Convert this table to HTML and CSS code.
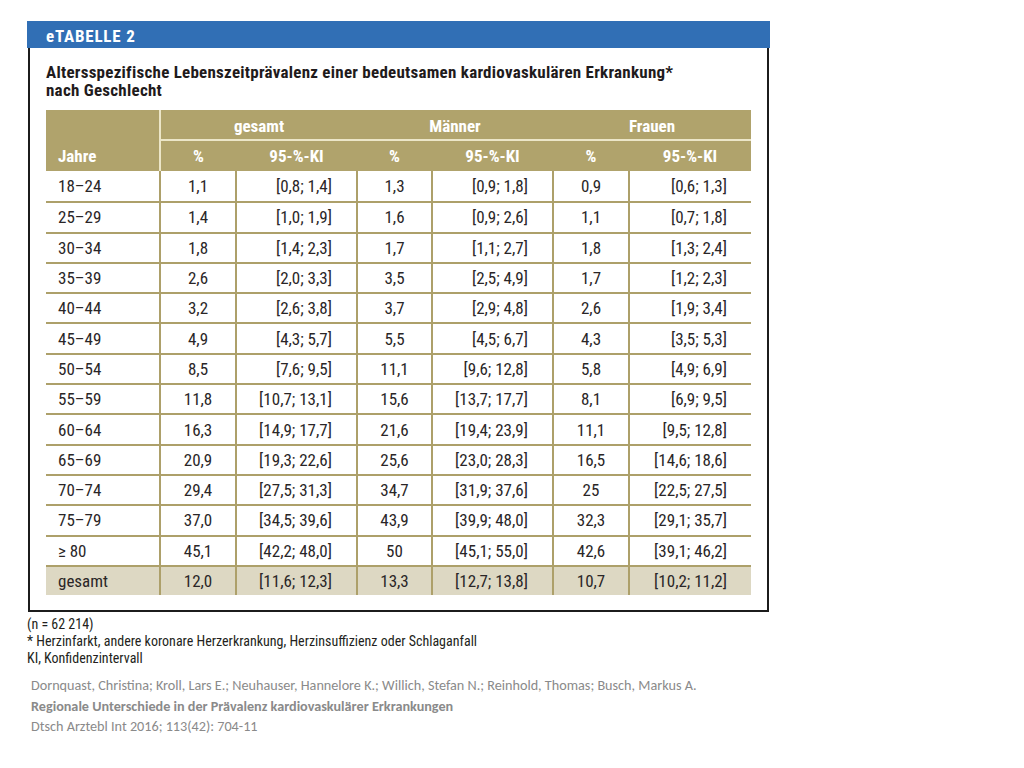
FILE: index.html
```html
<!DOCTYPE html>
<html lang="de">
<head>
<meta charset="utf-8">
<title>eTABELLE 2</title>
<link rel="stylesheet" href="styles.css">
</head>
<body>
<div class="page">
  <div class="panel">
    <div class="panel-head">eTABELLE 2</div>
    <div class="panel-body">
      <h1 class="title">Altersspezifische Lebenszeitprävalenz einer bedeutsamen kardiovaskulären Erkrankung*<br>nach Geschlecht</h1>
      <table class="data">
        <colgroup>
          <col class="c-age"><col class="c-pct"><col class="c-ki"><col class="c-pct2"><col class="c-ki"><col class="c-pct"><col class="c-ki3">
        </colgroup>
        <thead>
          <tr class="h1">
            <th rowspan="2" class="age">Jahre</th>
            <th colspan="2" class="grp">gesamt</th>
            <th colspan="2" class="grp">Männer</th>
            <th colspan="2" class="grp">Frauen</th>
          </tr>
          <tr class="h2">
            <th>%</th><th>95-%-KI</th>
            <th>%</th><th>95-%-KI</th>
            <th>%</th><th>95-%-KI</th>
          </tr>
        </thead>
        <tbody>
          <tr><td>18–24</td><td>1,1</td><td>[0,8; 1,4]</td><td>1,3</td><td>[0,9; 1,8]</td><td>0,9</td><td>[0,6; 1,3]</td></tr>
          <tr><td>25–29</td><td>1,4</td><td>[1,0; 1,9]</td><td>1,6</td><td>[0,9; 2,6]</td><td>1,1</td><td>[0,7; 1,8]</td></tr>
          <tr><td>30–34</td><td>1,8</td><td>[1,4; 2,3]</td><td>1,7</td><td>[1,1; 2,7]</td><td>1,8</td><td>[1,3; 2,4]</td></tr>
          <tr><td>35–39</td><td>2,6</td><td>[2,0; 3,3]</td><td>3,5</td><td>[2,5; 4,9]</td><td>1,7</td><td>[1,2; 2,3]</td></tr>
          <tr><td>40–44</td><td>3,2</td><td>[2,6; 3,8]</td><td>3,7</td><td>[2,9; 4,8]</td><td>2,6</td><td>[1,9; 3,4]</td></tr>
          <tr><td>45–49</td><td>4,9</td><td>[4,3; 5,7]</td><td>5,5</td><td>[4,5; 6,7]</td><td>4,3</td><td>[3,5; 5,3]</td></tr>
          <tr><td>50–54</td><td>8,5</td><td>[7,6; 9,5]</td><td>11,1</td><td>[9,6; 12,8]</td><td>5,8</td><td>[4,9; 6,9]</td></tr>
          <tr><td>55–59</td><td>11,8</td><td>[10,7; 13,1]</td><td>15,6</td><td>[13,7; 17,7]</td><td>8,1</td><td>[6,9; 9,5]</td></tr>
          <tr><td>60–64</td><td>16,3</td><td>[14,9; 17,7]</td><td>21,6</td><td>[19,4; 23,9]</td><td>11,1</td><td>[9,5; 12,8]</td></tr>
          <tr><td>65–69</td><td>20,9</td><td>[19,3; 22,6]</td><td>25,6</td><td>[23,0; 28,3]</td><td>16,5</td><td>[14,6; 18,6]</td></tr>
          <tr><td>70–74</td><td>29,4</td><td>[27,5; 31,3]</td><td>34,7</td><td>[31,9; 37,6]</td><td>25</td><td>[22,5; 27,5]</td></tr>
          <tr><td>75–79</td><td>37,0</td><td>[34,5; 39,6]</td><td>43,9</td><td>[39,9; 48,0]</td><td>32,3</td><td>[29,1; 35,7]</td></tr>
          <tr><td>≥ 80</td><td>45,1</td><td>[42,2; 48,0]</td><td>50</td><td>[45,1; 55,0]</td><td>42,6</td><td>[39,1; 46,2]</td></tr>
          <tr class="total"><td>gesamt</td><td>12,0</td><td>[11,6; 12,3]</td><td>13,3</td><td>[12,7; 13,8]</td><td>10,7</td><td>[10,2; 11,2]</td></tr>
        </tbody>
      </table>
    </div>
  </div>
  <div class="notes">
    <p>(n = 62 214)</p>
    <p>* Herzinfarkt, andere koronare Herzerkrankung, Herzinsuffizienz oder Schlaganfall</p>
    <p>KI, Konfidenzintervall</p>
  </div>
  <div class="cite">
    <p>Dornquast, Christina; Kroll, Lars E.; Neuhauser, Hannelore K.; Willich, Stefan N.; Reinhold, Thomas; Busch, Markus A.</p>
    <p class="cite-title">Regionale Unterschiede in der Prävalenz kardiovaskulärer Erkrankungen</p>
    <p>Dtsch Arztebl Int 2016; 113(42): 704-11</p>
  </div>
</div>
</body>
</html>
```

FILE: styles.css
```css
html, body {
  margin: 0;
  padding: 0;
  background: #ffffff;
}

.page {
  padding: 21px 0 0 27px;
  font-family: "Liberation Sans Narrow", "Roboto Condensed", "Liberation Sans", Arial, sans-serif;
  color: #231f20;
}

.panel {
  width: 743px;
}

.panel-head {
  height: 27px;
  background: #316fb5;
  color: #ffffff;
  font-weight: bold;
  font-size: 17px;
  line-height: 30px;
  padding-left: 19px;
  letter-spacing: 0.8px;
}

.panel-body {
  margin: 0 1px;
  border: 2px solid #1c1c1c;
  border-top: none;
  padding: 15px 16px 15px 16px;
}

.title {
  margin: 0 0 11px 0;
  font-size: 17px;
  line-height: 18px;
  font-weight: bold;
  letter-spacing: 0.25px;
  color: #1f1b1c;
  white-space: nowrap;
}

.data {
  border-collapse: collapse;
  width: 705px;
  table-layout: fixed;
  font-size: 17px;
}

.c-age { width: 114px; }
.c-pct { width: 76px; }
.c-pct2 { width: 75px; }
.c-ki { width: 121px; }
.c-ki3 { width: 122px; }

.data th {
  background: #b0a36c;
  color: #ffffff;
  font-weight: bold;
  padding: 0;
  text-align: center;
}

.data .h1 th.grp {
  height: 26px;
  padding-top: 3px;
  line-height: 26px;
  border-bottom: 2px solid #ece6c8;
}

.data .h2 th {
  height: 30px;
  line-height: 30px;
}

.data th.age {
  text-align: left;
  padding-left: 12px;
  vertical-align: bottom;
  line-height: 30px;
  border-right: 2px solid #ece6c8;
}

.data td {
  height: 28.3px;
  padding: 0;
  line-height: 28px;
  text-align: center;
  color: #2a2627;
  border-left: 2px solid #ada06a;
  border-top: 2px solid #ada06a;
}

.data tbody tr:first-child td {
  border-top: none;
  height: 30.3px;
}

.data td:first-child {
  border-left: none;
  text-align: left;
  padding-left: 12px;
}

.data td:nth-child(3),
.data td:nth-child(5),
.data td:nth-child(7) {
  text-align: right;
  padding-right: 24px;
}

.data tr.total td {
  background: #ddd8c3;
}

.notes {
  margin-top: 4px;
  font-size: 14px;
  line-height: 17px;
  color: #231f20;
}

.notes p {
  margin: 0;
}

.cite {
  margin-top: 8px;
  padding-left: 4px;
  font-family: Carlito, Calibri, Lato, "Open Sans", sans-serif;
  font-size: 14.2px;
  line-height: 20.5px;
  color: #8a8a8a;
}

.cite p {
  margin: 0;
}

.cite-title {
  font-weight: bold;
}
```
